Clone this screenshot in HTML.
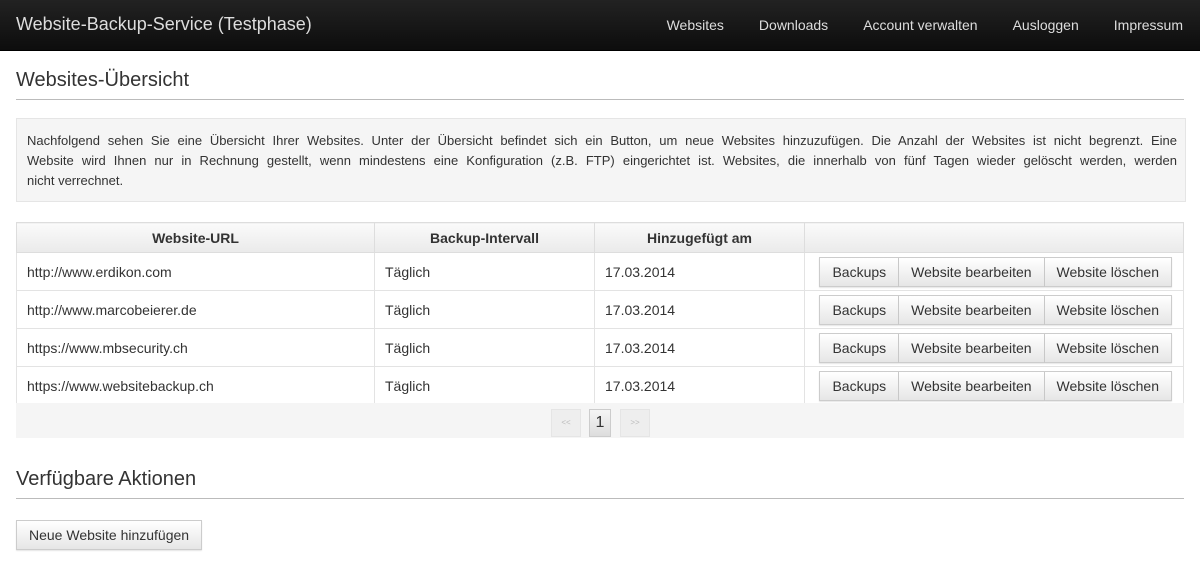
<!DOCTYPE html>
<html><head><meta charset="utf-8"><style>
body{margin:0;width:1200px;height:568px;overflow:hidden;background:#fff;font-family:"Liberation Sans",sans-serif;color:#333;}
.nav{position:absolute;left:0;top:0;width:1200px;height:50px;background:linear-gradient(#222,#0d0d0d);border-bottom:1px solid #000;}
.brand{position:absolute;left:16px;top:14px;font-size:18px;color:#ddd;}
.links{position:absolute;right:17px;top:17px;font-size:14px;color:#ddd;}
.links span{margin-left:35px;}
h2{position:absolute;left:16px;margin:0;font-weight:normal;font-size:20px;color:#333;}
.hr{position:absolute;left:16px;width:1168px;height:1px;background:#bbb;}
.info{position:absolute;left:16px;top:118px;width:1150px;height:70px;padding:12px 8px 0 10px;background:#f5f5f5;border:1px solid #e5e5e5;font-size:13px;line-height:20px;color:#333;}
.j{text-align:justify;text-align-last:justify;}
table{position:absolute;left:16px;top:222px;width:1168px;border-collapse:collapse;font-size:14px;table-layout:fixed;}
th{height:27px;background:linear-gradient(#fafafa,#eaeaea);border:1px solid #ddd;font-weight:bold;font-size:14px;}
td{height:37px;border:1px solid #e3e3e3;padding:0 10px;}
.btns{display:flex;justify-content:flex-end;margin-right:1px;}
.b{height:28px;line-height:28px;padding:0 12px;background:linear-gradient(#fff,#e6e6e6);border:1px solid #ccc;font-size:14px;color:#333;box-shadow:0 1px 1px rgba(0,0,0,.1);}
.b+.b{border-left:none}
.foot{position:absolute;left:16px;top:403px;width:1168px;height:35px;background:#f5f5f5;}
.pg{position:absolute;top:6px;width:28px;height:26px;border:1px solid #e5e5e5;background:#eee;font-size:8px;color:#bbb;text-align:center;line-height:26px;}
</style></head><body>
<div class="nav"><div class="brand">Website-Backup-Service (Testphase)</div>
<div class="links"><span>Websites</span><span>Downloads</span><span>Account verwalten</span><span>Ausloggen</span><span>Impressum</span></div></div>
<h2 style="top:69px">Websites-Übersicht</h2>
<div class="hr" style="top:99px"></div>
<div class="info"><div class="j">Nachfolgend sehen Sie eine Übersicht Ihrer Websites. Unter der Übersicht befindet sich ein Button, um neue Websites hinzuzufügen. Die Anzahl der Websites ist nicht begrenzt. Eine</div><div class="j">Website wird Ihnen nur in Rechnung gestellt, wenn mindestens eine Konfiguration (z.B. FTP) eingerichtet ist. Websites, die innerhalb von fünf Tagen wieder gelöscht werden, werden</div><div>nicht verrechnet.</div></div>
<table>
<colgroup><col style="width:358px"><col style="width:220px"><col style="width:210px"><col></colgroup>
<tr><th>Website-URL</th><th>Backup-Intervall</th><th>Hinzugefügt am</th><th></th></tr>
<tr><td>http://www.erdikon.com</td><td>Täglich</td><td>17.03.2014</td><td><div class="btns"><div class="b">Backups</div><div class="b">Website bearbeiten</div><div class="b">Website löschen</div></div></td></tr>
<tr><td>http://www.marcobeierer.de</td><td>Täglich</td><td>17.03.2014</td><td><div class="btns"><div class="b">Backups</div><div class="b">Website bearbeiten</div><div class="b">Website löschen</div></div></td></tr>
<tr><td>https://www.mbsecurity.ch</td><td>Täglich</td><td>17.03.2014</td><td><div class="btns"><div class="b">Backups</div><div class="b">Website bearbeiten</div><div class="b">Website löschen</div></div></td></tr>
<tr><td>https://www.websitebackup.ch</td><td>Täglich</td><td>17.03.2014</td><td><div class="btns"><div class="b">Backups</div><div class="b">Website bearbeiten</div><div class="b">Website löschen</div></div></td></tr>
</table>
<div class="foot">
<div class="pg" style="left:535px">&lt;&lt;</div>
<div class="pg" style="left:573px;width:20px;background:linear-gradient(#f5f5f5,#ddd);border-color:#ccc;color:#333;font-size:16px">1</div>
<div class="pg" style="left:604px">&gt;&gt;</div>
</div>
<h2 style="top:468px">Verfügbare Aktionen</h2>
<div class="hr" style="top:498px"></div>
<div class="b" style="position:absolute;left:16px;top:520px;height:28px;padding:0 12px">Neue Website hinzufügen</div>
</body></html>
